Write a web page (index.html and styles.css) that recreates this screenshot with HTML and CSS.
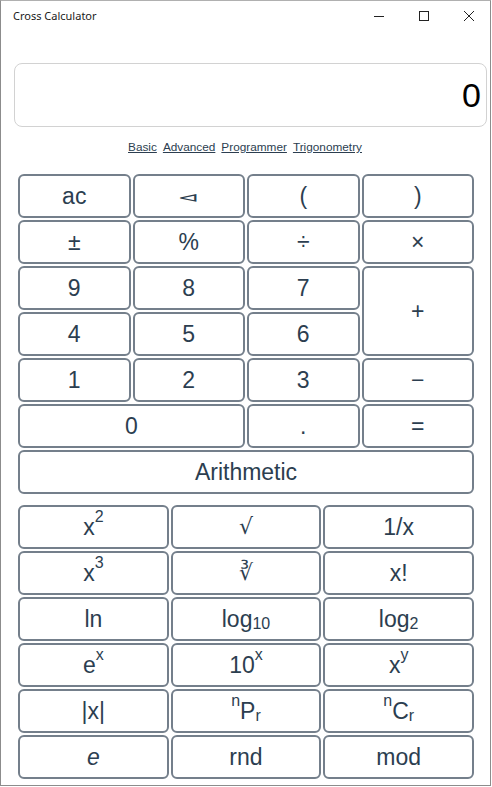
FILE: index.html
```html
<!DOCTYPE html>
<html lang="en">
<head>
<meta charset="utf-8">
<title>Cross Calculator</title>
<link rel="stylesheet" href="styles.css">
</head>
<body>
<div class="window">
  <div class="titlebar">
    <span class="title">Cross Calculator</span>
    <div class="controls">
      <span class="ctl">
        <svg width="10" height="10" viewBox="0 0 10 10"><path d="M0 5.5H10" stroke="#222" stroke-width="1" fill="none"/></svg>
      </span>
      <span class="ctl">
        <svg width="10" height="10" viewBox="0 0 10 10"><rect x="0.5" y="0.5" width="9" height="9" stroke="#222" stroke-width="1" fill="none"/></svg>
      </span>
      <span class="ctl">
        <svg width="10" height="10" viewBox="0 0 10 10"><path d="M0 0L10 10M10 0L0 10" stroke="#222" stroke-width="1" fill="none"/></svg>
      </span>
    </div>
  </div>

  <div class="content">
    <div class="display">0</div>

    <nav class="modes">
      <a href="#">Basic</a>
      <a href="#">Advanced</a>
      <a href="#">Programmer</a>
      <a href="#">Trigonometry</a>
    </nav>

    <div class="pad pad-basic">
      <button class="key">ac</button>
      <button class="key"><span class="back">⊲</span></button>
      <button class="key">(</button>
      <button class="key">)</button>

      <button class="key">±</button>
      <button class="key">%</button>
      <button class="key">÷</button>
      <button class="key">×</button>

      <button class="key">9</button>
      <button class="key">8</button>
      <button class="key">7</button>
      <button class="key tall">+</button>

      <button class="key">4</button>
      <button class="key">5</button>
      <button class="key">6</button>

      <button class="key">1</button>
      <button class="key">2</button>
      <button class="key">3</button>
      <button class="key">−</button>

      <button class="key wide2">0</button>
      <button class="key">.</button>
      <button class="key">=</button>

      <button class="key wide4">Arithmetic</button>
    </div>

    <div class="pad pad-sci">
      <button class="key">x<sup>2</sup></button>
      <button class="key root">√</button>
      <button class="key">1/x</button>

      <button class="key">x<sup>3</sup></button>
      <button class="key root">∛</button>
      <button class="key">x!</button>

      <button class="key">ln</button>
      <button class="key">log<sub>10</sub></button>
      <button class="key">log<sub>2</sub></button>

      <button class="key">e<sup>x</sup></button>
      <button class="key">10<sup>x</sup></button>
      <button class="key">x<sup>y</sup></button>

      <button class="key">|x|</button>
      <button class="key"><sup>n</sup>P<sub>r</sub></button>
      <button class="key"><sup>n</sup>C<sub>r</sub></button>

      <button class="key"><i>e</i></button>
      <button class="key">rnd</button>
      <button class="key">mod</button>
    </div>
  </div>
</div>
</body>
</html>
```

FILE: styles.css
```css
html, body {
  margin: 0;
  padding: 0;
  background: #ffffff;
}

.window {
  box-sizing: border-box;
  width: 491px;
  height: 786px;
  border: 1px solid #8c8c8c;
  border-top-color: #b0b0b0;
  background: #ffffff;
  display: flex;
  flex-direction: column;
}

.titlebar {
  height: 30px;
  display: flex;
  align-items: center;
  justify-content: space-between;
  flex-shrink: 0;
}

.title {
  margin-left: 12px;
  margin-top: -1px;
  font-family: "Noto Sans", "Liberation Sans", sans-serif;
  font-size: 11px;
  color: #1a1a1a;
}

.controls {
  display: flex;
  height: 30px;
  margin-right: 16px;
}

.ctl {
  width: 45px;
  display: flex;
  align-items: center;
  justify-content: flex-end;
}

.ctl svg {
  display: block;
  margin-top: -1px;
}

.content {
  display: flex;
  flex-direction: column;
  font-family: "Liberation Sans", Arial, sans-serif;
  color: #2c3e50;
}

.display {
  box-sizing: border-box;
  margin: 32px 0 0 13px;
  width: 473px;
  height: 64px;
  border: 1px solid #d2d2d2;
  border-radius: 8px;
  display: flex;
  align-items: center;
  justify-content: flex-end;
  padding-right: 5px;
  font-size: 34px;
  color: #000000;
}

.modes {
  margin: 13px 0 0 16px;
  width: 456px;
  height: 14px;
  display: flex;
  justify-content: center;
  gap: 6px;
  font-size: 11.8px;
  line-height: 14px;
}

.modes a {
  color: #2c3e50;
  text-decoration: underline;
}

.pad {
  margin-left: 17px;
  width: 456px;
  display: grid;
  gap: 2px;
  grid-auto-rows: 44px;
}

.pad-basic {
  margin-top: 20px;
  grid-template-columns: repeat(4, 1fr);
}

.pad-sci {
  margin-top: 11px;
  grid-template-columns: repeat(3, 1fr);
}

.key {
  box-sizing: border-box;
  margin: 0;
  padding: 0;
  border: 2px solid #747f8b;
  border-radius: 6px;
  background: #ffffff;
  font-family: "Liberation Sans", Arial, sans-serif;
  font-size: 23px;
  color: #2c3e50;
  display: flex;
  align-items: center;
  justify-content: center;
  line-height: 1;
}

.back {
  display: inline-block;
  font-family: "DejaVu Sans", "Liberation Sans", sans-serif;
  font-size: 26px;
  transform: scale(1, 0.5);
  margin-top: 1px;
}

.key.root {
  font-family: "DejaVu Sans", "Liberation Sans", sans-serif;
  font-size: 22px;
}

.key sup,
.key sub {
  font-size: 16px;
  line-height: 0;
  position: relative;
  vertical-align: baseline;
}

.key sup {
  top: -10px;
}

.key sub {
  top: 5px;
}

.key i {
  font-style: italic;
}

.tall {
  grid-row: span 2;
}

.wide2 {
  grid-column: span 2;
}

.wide4 {
  grid-column: span 4;
}
```
